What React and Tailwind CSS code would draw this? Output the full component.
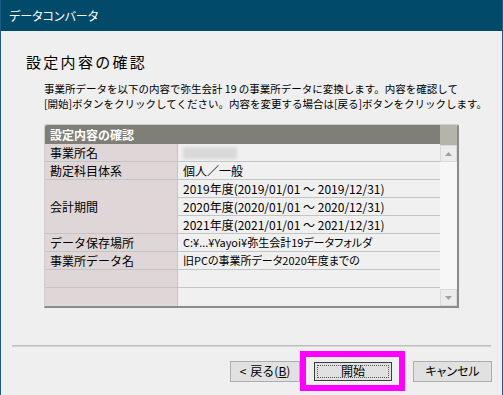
const jp = "font-['Noto_Sans_CJK_JP','Noto_Sans',sans-serif]";

const Row = ({ label, children, last }) => (
  <>
    <div className={`h-[18px] bg-[#dfd7d7] border-r border-[#c4c4c4] pl-[5px] flex items-center ${last ? "" : "border-b"} border-b-[#c4c4c4]`}>
      {label}
    </div>
    <div className={`h-[18px] bg-[#f0f0f0] pl-[5px] flex items-center ${last ? "" : "border-b"} border-b-[#c4c4c4]`}>
      {children}
    </div>
  </>
);

const periods = [
  "2019年度(2019/01/01 ～ 2019/12/31)",
  "2020年度(2020/01/01 ～ 2020/12/31)",
  "2021年度(2021/01/01 ～ 2021/12/31)",
];

export default function App() {
  return (
    <div className={`w-[503px] h-[395px] bg-[#efefef] border-x border-[#1b5d86] flex flex-col text-black ${jp}`}>
      {/* TITLE BAR */}
      <div className="h-[31px] bg-[#014a6a] flex items-center pl-[8px] text-white text-[12px] [font-feature-settings:'palt']">
        データコンバータ
      </div>

      {/* HEADING */}
      <h1 className="mt-[21px] ml-[25px] text-[15px] leading-[20px] tracking-[2.3px]">設定内容の確認</h1>

      <div className="mt-[9px] ml-[43px] text-[10.5px] leading-[15px] whitespace-nowrap">
        <p>事業所データを以下の内容で弥生会計 19 の事業所データに変換します。内容を確認して</p>
        <p>[開始]ボタンをクリックしてください。内容を変更する場合は[戻る]ボタンをクリックします。</p>
      </div>

      {/* TABLE */}
      <div className="mt-[13px] ml-[43px] w-[415px] h-[184px] flex border border-[#cfcfcf] border-r-2 border-b-2 border-r-[#8b8b8b] border-b-[#8b8b8b] rounded-t-[3px] overflow-hidden text-[12px]">
        <div className="flex-1 flex flex-col">
          <div className="h-[20px] bg-[#807f77] text-white font-bold pl-[5px] flex items-center text-[12px]">
            設定内容の確認
          </div>
          <div className="grid grid-cols-[133px_1fr] flex-1">
            <Row label="事業所名">
              <div className="w-[54px] h-[12px] bg-[#d9d9d9] blur-[1.5px]" />
            </Row>
            <Row label="勘定科目体系">個人／一般</Row>
            <div className="row-span-3 bg-[#dfd7d7] border-r border-b border-[#c4c4c4] pl-[5px] flex items-center">
              会計期間
            </div>
            {periods.map((p) => (
              <div key={p} className="h-[18px] bg-[#f0f0f0] pl-[5px] flex items-center border-b border-[#c4c4c4] text-[12px] whitespace-nowrap">
                {p}
              </div>
            ))}
            <Row label="データ保存場所">
              <span className="text-[11px] [font-feature-settings:'palt'] whitespace-nowrap">C:¥...¥Yayoi¥弥生会計19データフォルダ</span>
            </Row>
            <Row label="事業所データ名">
              <span className="text-[11px] [font-feature-settings:'palt'] whitespace-nowrap">旧PCの事業所データ2020年度までの</span>
            </Row>
            <Row label="" />
            <Row label="" last />
          </div>
        </div>

        {/* SCROLLBAR */}
        <div className="w-[17px] flex flex-col bg-[#f7f7f7]">
          <div className="h-[20px] bg-[#b4b4aa]" />
          <div className="h-[17px] bg-[#ececec] border border-[#dadada] flex items-center justify-center">
            <svg width="7" height="4" viewBox="0 0 7 4"><path d="M0 4 L3.5 0 L7 4 Z" fill="#a0a0a0" /></svg>
          </div>
          <div className="flex-1" />
          <div className="h-[17px] bg-[#ececec] border border-[#dadada] flex items-center justify-center">
            <svg width="7" height="4" viewBox="0 0 7 4"><path d="M0 0 L3.5 4 L7 0 Z" fill="#a0a0a0" /></svg>
          </div>
        </div>
      </div>

      {/* SEPARATOR */}
      <div className="mt-[37px] ml-[11px] w-[479px] h-[2px] border-t border-[#bdbdbd] bg-[#d6d6d6]" />

      {/* BUTTONS */}
      <div className="mt-[4px] flex items-center justify-end pr-[10px] text-[12px]">
        <button className="w-[70px] h-[21px] bg-[#e1e1e1] border border-[#adadad] flex items-center justify-center gap-[4px]">
          <span>&lt;</span>
          <span>戻る(<span className="underline">B</span>)</span>
        </button>
        <div className="h-[40px] w-[105px] border-[6px] border-[#ff00ff] pl-[8px] flex items-center">
          <button className="w-[78px] h-[19px] bg-[#e1e1e1] border border-[#3c3c3c] p-[2px]">
            <div className="w-full h-full border border-dotted border-[#555] flex items-center justify-center leading-none">
              開始
            </div>
          </button>
        </div>
        <button className="ml-[8px] w-[79px] h-[21px] bg-[#e1e1e1] border border-[#adadad] flex items-center justify-center [font-feature-settings:'palt']">
          キャンセル
        </button>
      </div>
    </div>
  );
}
